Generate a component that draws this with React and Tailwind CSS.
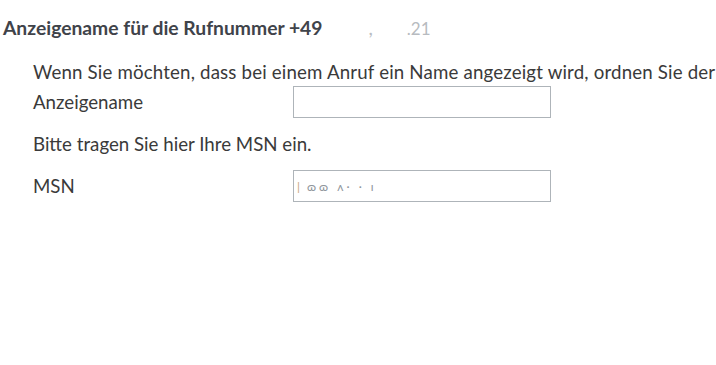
import React from 'react'

export default function App() {
  return (
    <div className="w-[716px] h-[365px] overflow-hidden bg-white font-['Lato','Liberation_Sans',sans-serif] text-[18.7px] text-[#3a3a3a]">
      {/* Heading */}
      <h2 className="pl-[3px] mt-[16px] leading-[24px] text-[19.3px] font-bold text-[#3f434a] whitespace-nowrap">
        Anzeigename für die Rufnummer +49
        <span className="ml-[46px] text-[#b9bdc2] font-normal">,</span>
        <span className="ml-[34px] text-[#b7bbc0] font-normal text-[17px]">.21</span>
      </h2>

      <div className="pl-[33px]">
        <p className="mt-[19px] leading-[24px] tracking-[0.16px] whitespace-nowrap">
          Wenn Sie möchten, dass bei einem Anruf ein Name angezeigt wird, ordnen Sie der Rufnummer einen Anzeigenamen zu.
        </p>

        <div className="flex items-center mt-[2px] h-[32px]">
          <label className="w-[260px] leading-[24px]">Anzeigename</label>
          <input
            type="text"
            className="w-[258px] h-[32px] border border-[#aeb4b9] bg-white outline-none"
          />
        </div>

        <p className="mt-[14px] leading-[24px] whitespace-nowrap">Bitte tragen Sie hier Ihre MSN ein.</p>

        <div className="flex items-center mt-[14px] h-[32px]">
          <label className="w-[260px] leading-[24px]">MSN</label>
          <div className="w-[258px] h-[32px] border border-[#aeb4b9] bg-white flex items-end pb-[7px] pl-[3px] text-[12px] leading-[14px] text-[#8f959b] tracking-[3px]">
            <span className="text-[#c7a27a]">|</span>
            <span className="ml-[4px]">ɷɷ ʌ· · ɪ</span>
          </div>
        </div>
      </div>
    </div>
  )
}
